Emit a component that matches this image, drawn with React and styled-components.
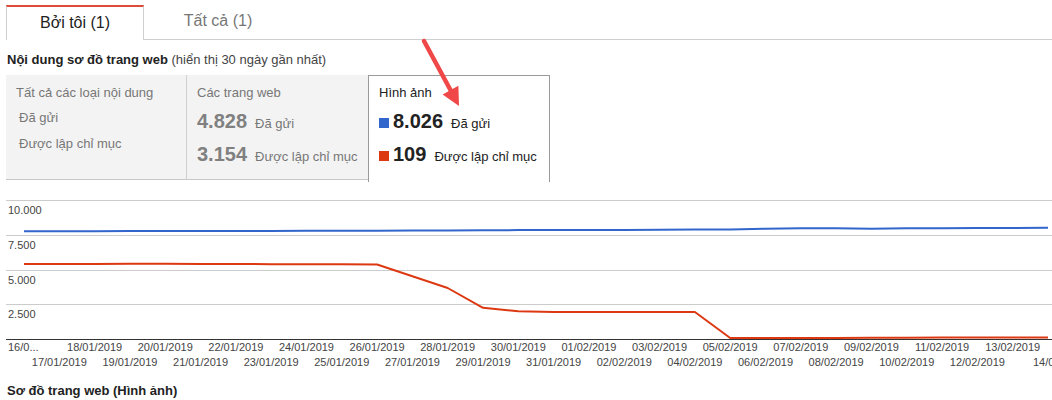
import React from 'react';
import styled, { createGlobalStyle } from 'styled-components';

const GlobalStyle = createGlobalStyle`
  html, body {
    margin: 0;
    padding: 0;
    background: #fff;
  }
  body {
    font-family: "Liberation Sans", Arial, sans-serif;
    color: #222;
    overflow: hidden;
  }
`;

const Page = styled.div`
  position: relative;
  width: 1052px;
  padding-top: 5px;
  box-sizing: border-box;
`;

const TabBar = styled.div`
  display: flex;
  align-items: flex-end;
  gap: 6px;
  height: 34px;
  margin-left: 6px;
  border-bottom: 1px solid #cfcfcf;
`;

const Tab = styled.div`
  width: 136px;
  height: ${({ $active }) => ($active ? '31px' : '32px')};
  padding-bottom: 2px;
  margin-bottom: ${({ $active }) => ($active ? '-1px' : '0')};
  display: flex;
  align-items: center;
  justify-content: center;
  font-size: 16px;
  color: ${({ $active }) => ($active ? '#222' : '#777')};
  background: #fff;
  border-top: ${({ $active }) => ($active ? '2px solid #dd4b39' : 'none')};
  border-left: ${({ $active }) => ($active ? '1px solid #cfcfcf' : 'none')};
  border-right: ${({ $active }) => ($active ? '1px solid #cfcfcf' : 'none')};
  cursor: pointer;
`;

const SectionTitle = styled.div`
  margin: ${({ $top }) => $top} 0 0 7px;
  font-size: 13px;
  line-height: 16px;
  font-weight: bold;
  color: #222;
`;

const Muted = styled.span`
  font-weight: normal;
  color: #444;
`;

const StatCards = styled.div`
  display: flex;
  align-items: flex-start;
  margin: 7px 0 0 6px;
`;

const StatCard = styled.div`
  width: ${({ $width }) => $width}px;
  height: 105px;
  padding: 10px 10px 0 10px;
  box-sizing: border-box;
  background: #f3f3f3;
  border-bottom: 1px solid #c8c8c8;
  border-right: ${({ $divider }) => ($divider ? '1px solid #cfcfcf' : 'none')};
  ${({ $active }) =>
    $active &&
    `
    height: 107px;
    padding-top: 9px;
    background: #fff;
    border: 1px solid #9a9a9a;
    border-bottom: none;
  `}
`;

const CardTitle = styled.div`
  font-size: 13px;
  line-height: 16px;
  color: ${({ $active }) => ($active ? '#222' : '#777')};
  white-space: nowrap;
`;

const SubList = styled.div`
  margin-top: 4px;
  padding-left: 3px;
`;

const SubItem = styled.div`
  font-size: 13px;
  line-height: 26px;
  color: #777;
`;

const StatRows = styled.div`
  margin-top: 4px;
`;

const StatRow = styled.div`
  display: flex;
  align-items: baseline;
  white-space: nowrap;
`;

const Swatch = styled.span`
  display: inline-block;
  width: 10px;
  height: 10px;
  margin-right: 4px;
  background: ${({ $color }) => $color};
`;

const BigNumber = styled.span`
  font-size: 20px;
  line-height: 33px;
  font-weight: bold;
  color: ${({ $active }) => ($active ? '#222' : '#808080')};
`;

const StatLabel = styled.span`
  margin-left: 8px;
  font-size: 13px;
  color: ${({ $active }) => ($active ? '#222' : '#777')};
`;

const ChartWrap = styled.div`
  margin: 8px 0 0 6px;
  width: 1046px;
  height: 180px;
`;

const ChartSvg = styled.svg`
  display: block;
  overflow: hidden;
  font-family: "Liberation Sans", Arial, sans-serif;
  font-size: 11px;
`;

const Arrow = styled.svg`
  position: absolute;
  left: 418px;
  top: 35px;
  pointer-events: none;
`;

const blue = [
  7780, 7780, 7785, 7790, 7790, 7795, 7800, 7805, 7810, 7815,
  7820, 7830, 7840, 7850, 7860, 7860, 7870, 7880, 7890, 7900,
  7910, 7960, 7990, 7990, 7960, 7990, 8000, 8010, 8020, 8026,
];

const red = [
  5410, 5410, 5420, 5440, 5430, 5420, 5420, 5400, 5390, 5390,
  5380, 4530, 3680, 2250, 2000, 1960, 1950, 1950, 1950, 1950,
  70, 70, 75, 80, 85, 95, 100, 105, 108, 109,
];

const X0 = 18;
const STEP = 35.31;
const Y0 = 149;
const PER = 138.5 / 10000;

const px = (i) => X0 + i * STEP;
const py = (v) => Y0 - v * PER;
const toPoints = (data) => data.map((v, i) => `${px(i).toFixed(1)},${py(v).toFixed(1)}`).join(' ');

const dateLabel = (i) => {
  const d = new Date(2019, 0, 16 + i);
  const dd = String(d.getDate()).padStart(2, '0');
  const mm = String(d.getMonth() + 1).padStart(2, '0');
  return `${dd}/${mm}/${d.getFullYear()}`;
};

const grid = [
  { y: 10.5, label: '10.000' },
  { y: 45.5, label: '7.500' },
  { y: 80.5, label: '5.000' },
  { y: 114.5, label: '2.500' },
];

const Chart = () => (
  <ChartSvg width="1046" height="180" viewBox="0 0 1046 180">
    {grid.map((g) => (
      <g key={g.label}>
        <line x1="0" x2="1046" y1={g.y} y2={g.y} stroke="#cccccc" strokeWidth="1" />
        <text x="2" y={g.y + 13} fill="#444">{g.label}</text>
      </g>
    ))}
    <line x1="0" x2="1046" y1="149.5" y2="149.5" stroke="#333" strokeWidth="1" />
    <polyline points={toPoints(blue)} fill="none" stroke="#3366cc" strokeWidth="2" strokeLinejoin="round" />
    <polyline points={toPoints(red)} fill="none" stroke="#dc3912" strokeWidth="2" strokeLinejoin="round" />
    {Array.from({ length: 30 }, (_, i) => {
      const row = i % 2 === 0 ? 161 : 176;
      if (i === 0) {
        return <text key={i} x="2" y={row} fill="#444">16/0...</text>;
      }
      if (i === 29) {
        // the last date runs past the chart's edge and is clipped there
        return <text key={i} x="1027" y={row} fill="#444">{dateLabel(i)}</text>;
      }
      return (
        <text key={i} x={px(i)} y={row} fill="#444" textAnchor="middle">
          {dateLabel(i)}
        </text>
      );
    })}
  </ChartSvg>
);

const App = () => (
  <>
    <GlobalStyle />
    <Page>
      <TabBar>
        <Tab $active>Bởi tôi (1)</Tab>
        <Tab>Tất cả (1)</Tab>
      </TabBar>

      <SectionTitle $top="12px">
        Nội dung sơ đồ trang web <Muted>(hiển thị 30 ngày gần nhất)</Muted>
      </SectionTitle>

      <StatCards>
        <StatCard $width={181} $divider>
          <CardTitle>Tất cả các loại nội dung</CardTitle>
          <SubList>
            <SubItem>Đã gửi</SubItem>
            <SubItem>Được lập chỉ mục</SubItem>
          </SubList>
        </StatCard>
        <StatCard $width={181}>
          <CardTitle>Các trang web</CardTitle>
          <StatRows>
            <StatRow>
              <BigNumber>4.828</BigNumber>
              <StatLabel>Đã gửi</StatLabel>
            </StatRow>
            <StatRow>
              <BigNumber>3.154</BigNumber>
              <StatLabel>Được lập chỉ mục</StatLabel>
            </StatRow>
          </StatRows>
        </StatCard>
        <StatCard $width={182} $active>
          <CardTitle $active>Hình ảnh</CardTitle>
          <StatRows>
            <StatRow>
              <Swatch $color="#3366cc" />
              <BigNumber $active>8.026</BigNumber>
              <StatLabel $active>Đã gửi</StatLabel>
            </StatRow>
            <StatRow>
              <Swatch $color="#dc3912" />
              <BigNumber $active>109</BigNumber>
              <StatLabel $active>Được lập chỉ mục</StatLabel>
            </StatRow>
          </StatRows>
        </StatCard>
      </StatCards>

      <ChartWrap>
        <Chart />
      </ChartWrap>

      <SectionTitle $top="13px">Sơ đồ trang web (Hình ảnh)</SectionTitle>

      <Arrow width="50" height="76" viewBox="0 0 50 76">
        <line x1="6" y1="6" x2="33" y2="56" stroke="#f04848" strokeWidth="4.5" strokeLinecap="round" />
        <polygon points="41,71 24.6,59.4 40.4,50.8" fill="#f04848" />
      </Arrow>
    </Page>
  </>
);

export default App;
